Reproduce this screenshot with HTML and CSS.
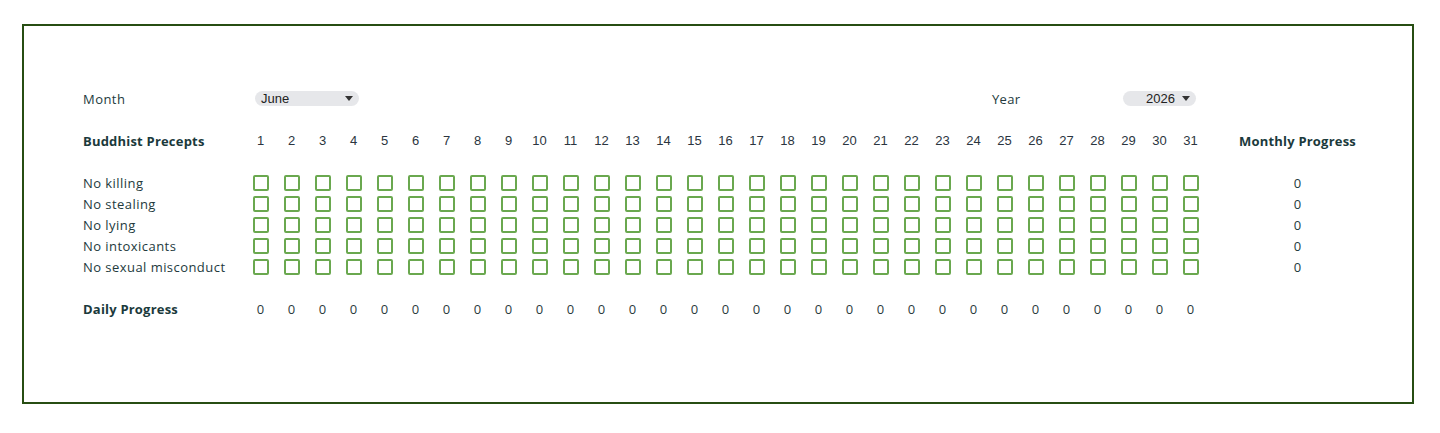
FILE: index.html
```html
<!DOCTYPE html>
<html>
<head>
  <title>Precept Tracker</title>
  <link rel="stylesheet" href="styles.css">
</head>
<body>
  <div class="sheet">
    <!-- month / year pickers -->
    <div class="row pickers">
      <div class="label">Month</div>
      <div class="select month">June<span class="caret"></span></div>
      <div class="year-label">Year</div>
      <div class="select year">2026<span class="caret"></span></div>
    </div>

    <div class="row head" id="head">
      <div class="label bold">Buddhist Precepts</div>
    </div>

    <div id="precepts"></div>

    <div class="row daily" id="daily">
      <div class="label bold">Daily Progress</div>
    </div>
  </div>

  <script>
    const precepts = ['No killing', 'No stealing', 'No lying', 'No intoxicants', 'No sexual misconduct'];
    const days = 31;

    const head = document.getElementById('head');
    for (let d = 1; d <= days; d++) {
      head.insertAdjacentHTML('beforeend', '<div class="day">' + d + '</div>');
    }
    head.insertAdjacentHTML('beforeend', '<div class="monthly bold">Monthly Progress</div>');

    const list = document.getElementById('precepts');
    precepts.forEach(name => {
      let html = '<div class="row"><div class="label">' + name + '</div>';
      for (let d = 1; d <= days; d++) {
        html += '<div class="cell"><span class="box"></span></div>';
      }
      html += '<div class="monthly">0</div></div>';
      list.insertAdjacentHTML('beforeend', html);
    });

    const daily = document.getElementById('daily');
    for (let d = 1; d <= days; d++) {
      daily.insertAdjacentHTML('beforeend', '<div class="cell count">0</div>');
    }
  </script>
</body>
</html>
```

FILE: styles.css
```css
body {
  margin: 0;
  background: #fff;
  font-family: 'Open Sans', sans-serif;
  font-size: 13px;
  color: #233a3d;
}

.sheet {
  width: 1388px;
  height: 376px;
  margin: 24px 0 0 22px;
  border: 2px solid #274e13;
}

.row {
  display: grid;
  grid-template-columns: 221px repeat(31, 31px) 183px;
  height: 21px;
  align-items: center;
}

.pickers {
  margin-top: 62px;
  margin-bottom: 21px;
}

.head {
  margin-bottom: 21px;
}

.daily {
  margin-top: 21px;
}

.label {
  padding-left: 59px;
  white-space: nowrap;
  letter-spacing: 0.45px;
}

.bold {
  font-weight: 700;
  color: #1b3a3c;
  letter-spacing: 0.2px;
}

.select {
  position: relative;
  height: 15px;
  margin: 0 10px;
  border-radius: 8px;
  background: #e6e7ea;
  font-family: 'Liberation Sans', Arial, sans-serif;
  font-size: 13px;
  line-height: 15px;
  color: #222;
}

.month {
  grid-column: 2 / span 4;
  padding-left: 6px;
}

.year {
  grid-column: 30 / span 3;
  text-align: right;
  padding-right: 21px;
}

.caret {
  position: absolute;
  right: 6px;
  top: 5px;
  border-left: 4px solid transparent;
  border-right: 4px solid transparent;
  border-top: 5px solid #333;
}

.year-label {
  grid-column: 26 / span 4;
  padding-left: 3px;
  letter-spacing: 0.3px;
}

.day {
  text-align: center;
  font-family: 'Liberation Sans', Arial, sans-serif;
  color: #2b3540;
}

.cell {
  display: flex;
  justify-content: center;
  align-items: center;
}

.box {
  width: 12px;
  height: 12px;
  border: 2px solid #6aa84f;
  border-radius: 2px;
}

.monthly {
  text-align: center;
  white-space: nowrap;
}

.count {
  color: #2b3a3d;
}
```
